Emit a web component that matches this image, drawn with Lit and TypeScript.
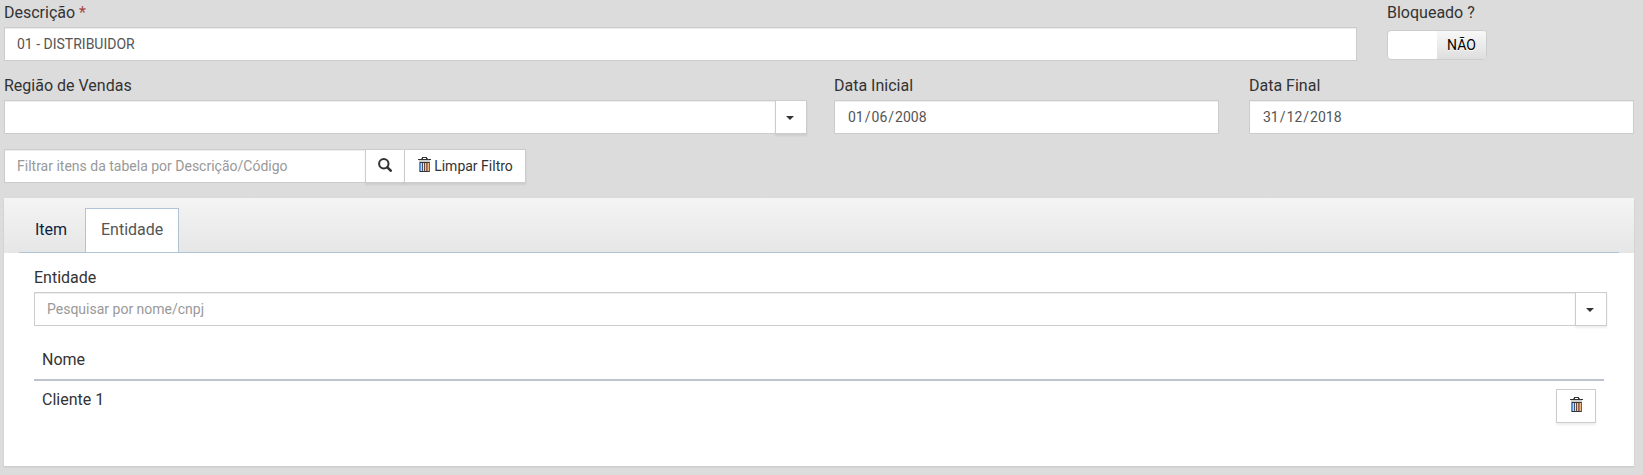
import { LitElement, html, css, svg } from "lit";
import { customElement } from "lit/decorators.js";

const trash = svg`<svg class="trash" width="13" height="17" viewBox="0 0 13 17" shape-rendering="crispEdges">
  <path d="M4 1h5v1H4z" fill="#333"/>
  <path d="M3 2h1v1H3z" fill="#b5794d"/><path d="M9 2h1v1H9z" fill="#4b83c4"/>
  <path d="M4 2h1v1H4zM8 2h1v1H8z" fill="#333"/>
  <path d="M0 3h13v1H0z" fill="#333"/>
  <path d="M1 4h11v2H1z" fill="#d0d0d0"/>
  <path d="M2 6h9v1H2zM2 15h9v1H2z" fill="#333"/>
  <path d="M1 6h1v10H1z" fill="#c8703f"/>
  <path d="M2 7h1v8H2z" fill="#5b93d8"/><path d="M3 7h1v8H3z" fill="#f0d3a4"/>
  <path d="M4 7h1v8H4z" fill="#45506e"/><path d="M5 7h1v8H5z" fill="#e4edb4"/>
  <path d="M6 7h1v8H6z" fill="#5d4a38"/><path d="M7 7h1v8H7z" fill="#a5dcee"/>
  <path d="M8 7h1v8H8z" fill="#9a6048"/><path d="M9 7h1v8H9z" fill="#5b93d8"/>
  <path d="M10 7h1v8h-1z" fill="#eebb88"/><path d="M11 6h1v10h-1z" fill="#3f67a8"/>
</svg>`;

const search = svg`<svg width="14" height="14" viewBox="0 0 14 14" fill="none" stroke="#333">
  <circle cx="5.8" cy="5.8" r="4.7" stroke-width="2"/>
  <path d="M9.4 9.4l3.3 3.3" stroke-width="2.6" stroke-linecap="round"/>
</svg>`;

const dateField = (day: string, month: string, year: string) => html`
  <div class="group"><div class="input date">${day}<span class="slash">/</span>${month}<span class="slash">/</span>${year}</div></div>`;

@customElement("app-root")
export class AppRoot extends LitElement {
  static styles = css`
    :host { display: block; min-height: 475px; box-sizing: border-box; padding: 0 9px 9px 4px;
      background: #dcdcdc; font: 16px/25px Roboto, sans-serif; color: #333; }
    * { box-sizing: border-box; }
    .row { display: grid; margin-bottom: 12px; }
    .first { grid-template-columns: 1353px 100px; column-gap: 30px; }
    .second { grid-template-columns: 830px 415px 385px; margin-bottom: 15px; }
    .combo-cell { padding-right: 27px; }
    .date-cell { padding-right: 30px; }
    .label { display: block; height: 27px; white-space: nowrap; }
    .required { color: #a94442; }
    .input { flex: 1; height: 34px; padding: 6px 12px; border: 1px solid #ccc; background: #fff;
      box-shadow: inset 0 1px 1px rgba(0,0,0,.075); font-size: 14px; line-height: 20px; color: #555; white-space: nowrap; }
    .date { padding-left: 13px; }
    .slash { padding: 0 1px; }
    .placeholder { color: #999; }
    .group { display: flex; }
    .btn { display: flex; align-items: center; justify-content: center; height: 34px; border: 1px solid #ccc;
      background: #fff; box-shadow: 0 2px 2px rgba(0,0,0,.07); font-size: 14px; line-height: 20px; color: #333; white-space: nowrap; }
    .btn.joined { margin-left: -1px; }
    .drop { width: 32px; padding-right: 2px; }
    .caret { border: 4px solid transparent; border-top-color: #333; border-bottom: 0; margin-top: 2px; }
    .find { width: 40px; padding-bottom: 3px; }
    .clear { width: 122px; gap: 3px; padding-left: 1px; }
    .clear .trash { margin-bottom: 3px; }
    .switch { display: flex; width: 100px; height: 30px; margin-top: 3px; border: 1px solid #ccc; border-radius: 4px;
      overflow: hidden; background: #fff; }
    .off { margin-left: auto; width: 49px; background: linear-gradient(#f8f8f8, #dedede); color: #000;
      font-size: 14px; line-height: 28px; text-align: center; text-shadow: 0 1px 0 #fff; }
    .filter { width: 522px; margin-bottom: 15px; }
    .panel { height: 268px; background: #fff; box-shadow: 0 1px 2px rgba(0,0,0,.1); }
    .head { height: 55px; padding: 10px 15px 0; background: linear-gradient(#f4f4f4, #e6e6e6); }
    .tabs { display: flex; height: 45px; border-bottom: 1px solid #b0c4d8; }
    .tab { width: 66px; padding: 9px 0 0 16px; color: #0b1f3f; }
    .tab.active { width: 94px; height: 44px; padding-left: 15px; padding-top: 8px; color: #555; background: #fff;
      border: 1px solid #b0c4d8; border-bottom: 0; }
    .body { padding: 12px 27px 0 30px; }
    .thead { height: 55px; margin-right: 3px; padding: 21px 8px 0; border-bottom: 2px solid #bcc5cd; }
    .line { display: flex; justify-content: space-between; margin-right: 3px; padding: 8px; }
    .client { margin-top: -2px; }
    .remove { width: 40px; padding-bottom: 3px; }
  `;

  render() {
    return html`
      <div class="row first">
        <div><span class="label">Descrição <span class="required">*</span></span>
          <div class="group"><div class="input">01 - DISTRIBUIDOR</div></div></div>
        <div><span class="label">Bloqueado ?</span><div class="switch"><div class="off">NÃO</div></div></div>
      </div>
      <div class="row second">
        <div class="combo-cell"><span class="label">Região de Vendas</span>
          <div class="group"><div class="input"></div><div class="btn joined drop"><i class="caret"></i></div></div></div>
        <div class="date-cell"><span class="label">Data Inicial</span>${dateField("01", "06", "2008")}</div>
        <div><span class="label">Data Final</span>${dateField("31", "12", "2018")}</div>
      </div>
      <div class="group filter">
        <div class="input placeholder">Filtrar itens da tabela por Descrição/Código</div>
        <div class="btn joined find">${search}</div>
        <div class="btn joined clear">${trash}<span>Limpar Filtro</span></div>
      </div>
      <div class="panel">
        <div class="head"><div class="tabs"><div class="tab">Item</div><div class="tab active">Entidade</div></div></div>
        <div class="body">
          <span class="label">Entidade</span>
          <div class="group"><div class="input placeholder">Pesquisar por nome/cnpj</div><div class="btn joined drop"><i class="caret"></i></div></div>
          <div class="thead">Nome</div>
          <div class="line"><span class="client">Cliente 1</span><div class="btn remove">${trash}</div></div>
        </div>
      </div>`;
  }
}
